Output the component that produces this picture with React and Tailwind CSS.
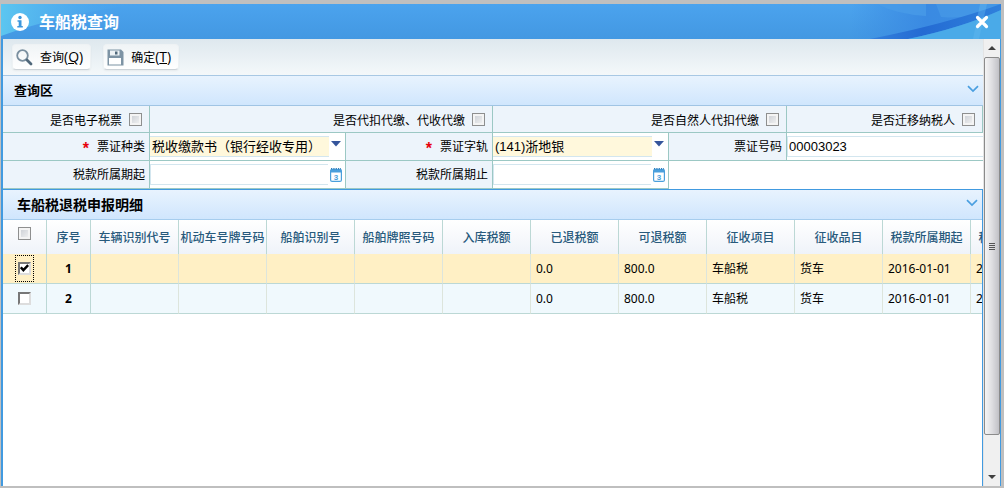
import { useState } from 'react';

const columns = ['车辆识别代号', '机动车号牌号码', '船舶识别号', '船舶牌照号码', '入库税额', '已退税额', '可退税额', '征收项目', '征收品目', '税款所属期起', '税款所属期止'];

const rows = [
    { id: 1, cells: ['', '', '', '', '', '0.0', '800.0', '车船税', '货车', '2016-01-01', '2016-12-31'] },
    { id: 2, cells: ['', '', '', '', '', '0.0', '800.0', '车船税', '货车', '2016-01-01', '2016-12-31'] },
];

const SearchIcon = () => (
    <svg width="17" height="17" viewBox="0 0 17 17" fill="none">
        <circle cx="6.500" cy="6.500" r="5.300" stroke="#7a8f9f" strokeWidth="1.800" />
        <path d="M11 11 15 15" stroke="#50687b" strokeWidth="2.800" strokeLinecap="round" />
    </svg>
)

const SaveIcon = () => (
    <svg width="17" height="17" viewBox="0 0 17 17">
        <path d="M0.500.500H14l2.500 2.500v13.500H.5z" fill="#7d93a4" />
        <path d="M3 1.500h9.500v5H3z" fill="#eef3f6" />
        <path d="M8 2.500h2.500v3H8z" fill="#50687b" />
        <path d="M2 9h12v6.500H2z" fill="#fff" />
    </svg>
)

const InfoIcon = () => (
    <svg width="18" height="18" viewBox="0 0 18 18">
        <circle cx="9" cy="9" r="9" fill="#fff" />
        <circle cx="9" cy="4.500" r="1.700" fill="#3d97dd" />
        <path d="M6.500 7.200H10.500V13H11.800V14.500H6.300V13H7.700V8.700H6.500z" fill="#3d97dd" />
    </svg>
)

const CalendarIcon = () => (
    <svg width="12" height="14" viewBox="0 0 12 14">
        <rect x="0.600" y="1.600" width="10.800" height="11.800" rx="1.500" fill="#fff" stroke="#4a9fdc" strokeWidth="1.200" />
        <path d="M0.500 1.500h11V4.500H.5z" fill="#4a9fdc" />
        <path d="M1 .8h10" stroke="#2f7fbd" strokeWidth="1.400" strokeDasharray="1.300 1" />
        <text x="6" y="11.500" fontSize="8" fontWeight="bold" textAnchor="middle" fill="#4a9fdc" fontFamily="Liberation Sans, sans-serif">3</text>
    </svg>
)

const Chevron = () => (
    <svg width="12" height="8" viewBox="0 0 12 8" fill="none">
        <path d="M1 1.200 6 6l5-4.800" stroke="#4a9fe0" strokeWidth="1.700" />
    </svg>
)

function GrayCheckbox({ id, label }) {
    return (
        <input
            id={id}
            type="checkbox"
            aria-label={label}
            className="block h-[13px] w-[13px] shrink-0 appearance-none border border-[#8e8f8f] bg-linear-to-br from-[#c8ccd2] to-[#f6f6f6] shadow-[inset_0_0_0_2px_#f4f4f4] checked:bg-[#4a9fe0]"
        />
    )
}

function RowCheckbox({ checked, onChange, label }) {
    return (
        <span className={`relative flex h-[27px] w-[19px] items-center justify-center border border-dotted ${checked ? 'border-black' : 'border-transparent'}`}>
            <input
                type="checkbox"
                aria-label={label}
                checked={checked}
                onChange={onChange}
                className="block h-[13px] w-[13px] appearance-none border-2 border-t-[#777] border-r-[#ddd] border-b-[#ddd] border-l-[#777] bg-white outline-none"
            />
            {checked && (
                <svg className="pointer-events-none absolute" width="9" height="9" viewBox="0 0 8 8" fill="none">
                    <path d="M.7 3 3 5.500 7.300 1" stroke="#000" strokeWidth="2.200" />
                </svg>
            )}
        </span>
    )
}

function CheckCell({ id, children, className = '' }) {
    return (
        <div className={`flex items-center justify-end gap-[7px] border-r border-b border-[#9cc8c4] bg-[#edf4fb] pr-[7px] ${className}`}>
            <label htmlFor={id} className="pt-1">{children}</label>
            <GrayCheckbox id={id} />
        </div>
    )
}

function LabelCell({ htmlFor, required, children }) {
    return (
        <div className="flex items-center justify-end gap-2 border-r border-b border-[#9cc8c4] bg-[#edf4fb] pr-1">
            {required && <span className="pt-1 font-['Liberation_Sans',sans-serif] text-base leading-4 font-bold text-red-600">*</span>}
            <label htmlFor={htmlFor}>{children}</label>
        </div>
    )
}

function SelectCell({ id, value }) {
    return (
        <div className="relative flex items-center border-r border-b border-[#9cc8c4] bg-white">
            <select id={id} className="mr-4 h-[21px] w-full appearance-none border-y border-[#d3e6ef] bg-[#fff8dc] pl-[2px] font-['Liberation_Sans','Noto_Sans_CJK_SC',sans-serif] text-[13px] whitespace-nowrap outline-none">
                <option>{value}</option>
            </select>
            <svg className="pointer-events-none absolute top-2 right-1" width="10" height="6" viewBox="0 0 10 6">
                <path d="M0 0h10L5 5.500z" fill="#35559b" />
            </svg>
        </div>
    )
}

function DateCell({ id }) {
    return (
        <div className="flex items-center border-r border-b border-[#9cc8c4] bg-white pr-[3px]">
            <input id={id} type="text" className="mr-[2px] h-[21px] w-full min-w-0 border-y border-l border-[#d3e6ef] bg-white px-[2px] text-[13px] outline-none" />
            <button type="button" aria-label="选择日期"><CalendarIcon /></button>
        </div>
    )
}

function ToolButton({ icon, text, hotkey }) {
    return (
        <button type="button" className="flex h-[26px] items-center gap-[7px] rounded-sm border border-[#eef2f4] border-b-[#ccd3d8] bg-linear-to-b from-[#f0f4f6] to-white pr-[7px] pl-[3px] shadow-xs">
            {icon}
            <span className="font-['Open_Sans','Noto_Sans_CJK_SC',sans-serif] text-sm">
                <span className="text-xs">{text}</span>(<u>{hotkey}</u>)
            </span>
        </button>
    )
}

function Scrollbar() {
    return (
        <div className="flex w-[17px] shrink-0 flex-col border-l border-[#e4e4e4] bg-[#f0f0f0]">
            <button type="button" aria-label="向上滚动" className="flex h-[18px] items-center justify-center">
                <svg width="8" height="4" viewBox="0 0 8 4"><path d="M0 4 4 0l4 4z" fill="#404040" /></svg>
            </button>
            <div className="flex min-h-0 flex-1 flex-col">
                <div className="flex basis-[92%] flex-col items-center justify-center gap-px rounded-xs border border-[#8b8b8b] bg-linear-to-r from-[#f5f5f5] via-[#dedee1] to-[#c1c1c6]">
                    <span className="h-px w-[6px] bg-[#555]" />
                    <span className="h-px w-[6px] bg-[#555]" />
                    <span className="h-px w-[6px] bg-[#555]" />
                    <span className="h-px w-[6px] bg-[#555]" />
                </div>
            </div>
            <button type="button" aria-label="向下滚动" className="flex h-[18px] items-center justify-center">
                <svg width="8" height="4" viewBox="0 0 8 4"><path d="M0 0h8L4 4z" fill="#404040" /></svg>
            </button>
        </div>
    )
}

export default function App() {
    const [selected, setSelected] = useState([1]);

    const toggle = (id) => {
        setSelected(selected.includes(id) ? selected.filter(item => item !== id) : [...selected, id]);
    };

    return (
        <div className="flex h-screen flex-col bg-[#bfbfbf] pt-1 pr-[3px] pb-[2px] pl-px font-['Noto_Sans','Noto_Sans_CJK_SC',sans-serif] text-xs text-black">
            <header className="relative flex h-[35px] shrink-0 items-center justify-between bg-linear-to-b from-[#4ba3ee] to-[#4398e2] pr-3 pl-[10px]">
                <svg className="absolute inset-y-0 left-0" width="200" height="35" viewBox="0 0 200 35">
                    <defs>
                        <linearGradient id="glow" x1="0" y1="0" x2="1" y2="0">
                            <stop offset="0" stopColor="#5cc6f0" />
                            <stop offset="1" stopColor="#4ba3ee" stopOpacity="0" />
                        </linearGradient>
                    </defs>
                    <path d="M0 0h140Q60 10 0 32z" fill="url(#glow)" />
                </svg>
                <svg className="absolute inset-y-0 right-0" width="150" height="35" viewBox="0 0 150 35">
                    <defs>
                        <linearGradient id="shade" x1="0" y1="0" x2="1" y2="0">
                            <stop offset="0" stopColor="#3a8ae2" stopOpacity="0" />
                            <stop offset="0.500" stopColor="#3a8ae2" />
                            <stop offset="1" stopColor="#3b8fe3" />
                        </linearGradient>
                        <linearGradient id="band" x1="0" y1="0" x2="1" y2="0">
                            <stop offset="0" stopColor="#3380dc" />
                            <stop offset="0.400" stopColor="#246bd3" />
                            <stop offset="1" stopColor="#2f80dc" />
                        </linearGradient>
                    </defs>
                    <path d="M0 0h150v35H0z" fill="url(#shade)" />
                    <path d="M26 0h49v12Q45 10 26 0z" fill="#4a9de8" opacity=".7" />
                    <path d="M85 0h65v4Q120 16 90 13z" fill="#4a9de8" opacity=".6" />
                    <path d="M19 35Q95 20 150 0v6Q110 24 57 35z" fill="url(#band)" />
                    <path d="M57 35Q110 24 150 6v29z" fill="#4aaae8" />
                    <path d="M129 0h7l-8 35h-6z" fill="#65baf0" opacity=".4" />
                </svg>
                <div className="relative flex items-center gap-[10px]">
                    <InfoIcon />
                    <h1 className="text-base font-bold text-white">车船税查询</h1>
                </div>
                <button type="button" aria-label="关闭" className="relative">
                    <svg width="14" height="14" viewBox="0 0 14 14">
                        <path d="M2.500 2.500 11.500 11.500M11.500 2.500 2.500 11.500" stroke="#fff" strokeWidth="3.200" strokeLinecap="round" />
                    </svg>
                </button>
            </header>

            <div className="flex min-h-0 flex-1 border-r border-l-2 border-[#419ae0] bg-white">
                <main className="flex min-w-0 flex-1 flex-col overflow-hidden">
                    <div className="flex h-[37px] shrink-0 items-center gap-3 border-b border-[#a8c8e4] bg-linear-to-b from-[#dee8ee] to-[#f4f8fa] pl-[9px]">
                        <ToolButton icon={<SearchIcon />} text="查询" hotkey="Q" />
                        <ToolButton icon={<SaveIcon />} text="确定" hotkey="T" />
                    </div>

                    <section className="shrink-0">
                        <div className="flex h-[30px] items-center justify-between border-b border-[#a0c4e4] bg-linear-to-b from-[#e8f3fe] to-[#d0e6fd] pr-1 pl-[11px]">
                            <h2 className="text-[13px] font-bold">查询区</h2>
                            <button type="button" aria-label="收起查询区" className="pb-1"><Chevron /></button>
                        </div>
                        <form className="grid auto-rows-[28px] grid-cols-[147fr_196fr_147fr_176fr_118fr_196fr] grid-rows-[27px]">
                            <CheckCell id="eTicket">是否电子税票</CheckCell>
                            <CheckCell id="withhold" className="col-span-2">是否代扣代缴、代收代缴</CheckCell>
                            <CheckCell id="person" className="col-span-2">是否自然人代扣代缴</CheckCell>
                            <CheckCell id="moved">是否迁移纳税人</CheckCell>

                            <LabelCell htmlFor="kind" required>票证种类</LabelCell>
                            <SelectCell id="kind" value="税收缴款书（银行经收专用）" />
                            <LabelCell htmlFor="track" required>票证字轨</LabelCell>
                            <SelectCell id="track" value="(141)浙地银" />
                            <LabelCell htmlFor="number">票证号码</LabelCell>
                            <div className="flex items-center border-b border-[#9cc8c4] bg-white">
                                <input id="number" type="text" defaultValue="00003023" className="h-[21px] w-full border-y border-l border-[#d3e6ef] px-px font-['Liberation_Sans','Noto_Sans_CJK_SC',sans-serif] text-[13px] outline-none" />
                            </div>

                            <LabelCell htmlFor="from">税款所属期起</LabelCell>
                            <DateCell id="from" />
                            <LabelCell htmlFor="to">税款所属期止</LabelCell>
                            <DateCell id="to" />
                        </form>
                    </section>

                    <section className="min-h-0 flex-1 overflow-hidden border-t border-r border-[#419ae0]">
                        <div className="flex h-[30px] items-center justify-between border-b border-[#a6cdee] bg-linear-to-b from-[#e8f3fe] to-[#d0e6fd] pr-1 pl-[14px]">
                            <h2 className="text-sm font-bold">车船税退税申报明细</h2>
                            <button type="button" aria-label="收起明细" className="pb-1"><Chevron /></button>
                        </div>
                        <table className="w-[1056px] table-fixed border-separate border-spacing-0">
                            <thead>
                                <tr className="h-[34px] bg-linear-to-b from-white to-[#eff3f9] text-[#285a7c]">
                                    <th className="w-11 border-r border-[#bcd8d5]">
                                        <div className="flex justify-center pb-2"><GrayCheckbox id="all" label="全选" /></div>
                                    </th>
                                    <th className="w-11 border-r border-[#bcd8d5] pt-[2px] font-medium">序号</th>
                                    {columns.map(name => (
                                        <th key={name} className="w-[88px] border-r border-[#bcd8d5] pt-[2px] font-medium whitespace-nowrap">{name}</th>
                                    ))}
                                </tr>
                            </thead>
                            <tbody>
                                {rows.map(row => (
                                    <tr key={row.id} className={selected.includes(row.id) ? 'h-[30px] bg-[#fff0c5]' : 'h-[30px] bg-[#f0f9fd]'}>
                                        <td className="border-r border-b border-[#bcd8d5]">
                                            <div className="flex justify-center">
                                                <RowCheckbox label={`选择第${row.id}行`} checked={selected.includes(row.id)} onChange={() => toggle(row.id)} />
                                            </div>
                                        </td>
                                        <td className="border-r border-b border-[#bcd8d5] text-center font-bold">{row.id}</td>
                                        {row.cells.map((cell, index) => (
                                            <td key={index} className="border-r border-b border-r-[#dde5dc] border-b-[#bcd8d5] pl-[5px] whitespace-nowrap">{cell}</td>
                                        ))}
                                    </tr>
                                ))}
                            </tbody>
                        </table>
                    </section>
                </main>
                <Scrollbar />
            </div>
        </div>
    )
}
